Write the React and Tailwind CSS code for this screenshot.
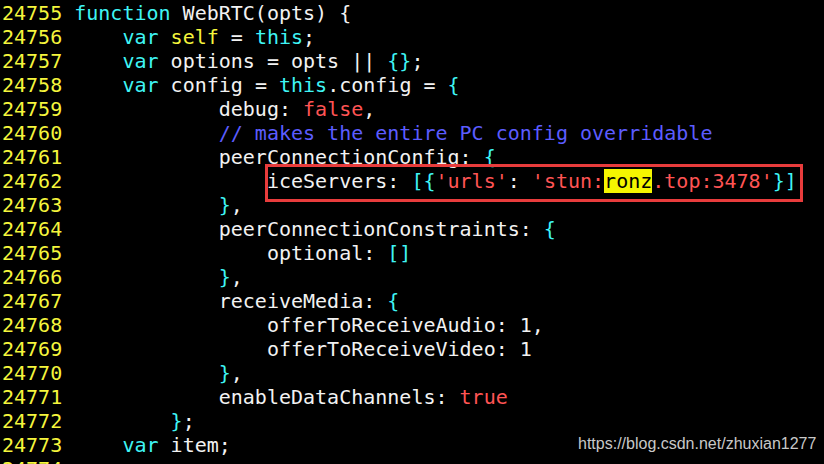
import React from "react";

/* token colours, vim-ish on black */
const C = {
  n: "text-[#f2f2f2]",
  k: "text-[#3ff5f5]",
  y: "text-[#f5f53c]",
  s: "text-[#ff5454]",
  c: "text-[#5c5cff]",
};

// each line: [indent, [[colour, text], ...]]
const lines = [
  [0, [["k", "function"], ["n", " WebRTC(opts) {"]]],
  [4, [["k", "var"], ["n", " "], ["y", "self"], ["n", " = "], ["k", "this"], ["n", ";"]]],
  [4, [["k", "var"], ["n", " options = opts || "], ["k", "{}"], ["n", ";"]]],
  [4, [["k", "var"], ["n", " config = "], ["k", "this"], ["n", ".config = "], ["k", "{"]]],
  [12, [["n", "debug: "], ["s", "false"], ["n", ","]]],
  [12, [["c", "// makes the entire PC config overridable"]]],
  [12, [["n", "peerConnectionConfig: "], ["k", "{"]]],
  [16, "ice"],
  [12, [["k", "}"], ["n", ","]]],
  [12, [["n", "peerConnectionConstraints: "], ["k", "{"]]],
  [16, [["n", "optional: "], ["k", "[]"]]],
  [12, [["k", "}"], ["n", ","]]],
  [12, [["n", "receiveMedia: "], ["k", "{"]]],
  [16, [["n", "offerToReceiveAudio: 1,"]]],
  [16, [["n", "offerToReceiveVideo: 1"]]],
  [12, [["k", "}"], ["n", ","]]],
  [12, [["n", "enableDataChannels: "], ["s", "true"]]],
  [8, [["k", "}"], ["n", ";"]]],
  [4, [["k", "var"], ["n", " item;"]]],
  [0, []],
];

function IceLine() {
  return (
    <>
      <span className={C.n}>iceServers: </span>
      <span className={C.k}>[{"{"}</span>
      <span className={C.s}>'urls'</span>
      <span className={C.n}>: </span>
      <span className={C.s}>'stun:</span>
      <span className="bg-[#f5f500] text-black">ronz</span>
      <span className={C.s}>.top:3478'</span>
      <span className={C.k}>{"}]"}</span>
    </>
  );
}

export default function App() {
  return (
    <div
      className="relative w-[824px] h-[464px] overflow-hidden bg-black text-[20px] leading-[24px]"
      style={{ fontFamily: '"DejaVu Sans Mono", monospace' }}
    >
      <div className="flex flex-col pt-px pl-[2px]">
        {lines.map(([indent, toks], i) => (
          <div key={i} className="h-[24px] whitespace-pre flex">
            <span className="text-[#f5f53c]">{String(24755 + i) + " "}</span>
            <span>
              {" ".repeat(indent)}
              {toks === "ice" ? (
                <IceLine />
              ) : (
                toks.map(([c, t], j) => (
                  <span key={j} className={C[c]}>
                    {t}
                  </span>
                ))
              )}
            </span>
          </div>
        ))}
      </div>

      {/* red annotation box */}
      <div className="absolute left-[265px] top-[164px] w-[538px] h-[38px] border-[3px] border-[#e83c3c]" />

      {/* watermark */}
      <div
        className="absolute left-[578px] top-[434px] text-[16px] leading-[20px] text-[#c8c8c8]"
        style={{ fontFamily: '"Liberation Sans", Arial, sans-serif' }}
      >
        https://blog.csdn.net/zhuxian1277
      </div>
    </div>
  );
}
